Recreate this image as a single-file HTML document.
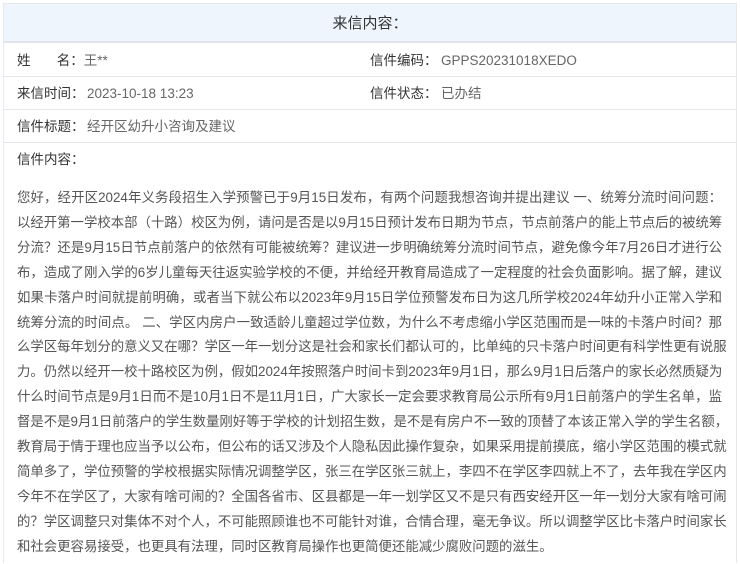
<!DOCTYPE html>
<html><head><meta charset="utf-8">
<style>
*{margin:0;padding:0;box-sizing:border-box}
body{width:740px;height:564px;background:#fff;font-family:"Liberation Sans","Noto Sans CJK SC",sans-serif;overflow:hidden;position:relative}
.box{position:absolute;left:3px;top:3px;width:734px;height:560px;border:1px solid #e6e9ee;border-bottom:none}
.hd{position:absolute;left:4px;top:4px;width:732px;height:39px;background:#eef5fd;border-bottom:2px solid #dfe4ea;text-align:center;line-height:39px;font-size:15px;color:#333}
.row{position:absolute;left:4px;width:732px;height:33px;border-bottom:1px solid #e3e6ea;font-size:13.5px;line-height:33px;color:#333}
.row span{position:absolute;white-space:nowrap}
.v{color:#666}
.c{position:absolute;left:17px;top:186px;width:705px;font-size:13.4px;color:#555;line-height:24.9px}
.c div{white-space:nowrap;text-align:justify;text-align-last:justify;width:705px}
.c div.l{text-align-last:left}
</style></head><body>
<div class="box"></div>
<div class="hd">来信内容：</div>
<div class="row" style="top:44px"><span style="left:13px">姓&nbsp;&nbsp;&nbsp;&nbsp;&nbsp;&nbsp;&nbsp;名：<span class="v" style="position:static">王**</span></span><span style="left:366px">信件编码：</span><span class="v" style="left:437px">GPPS20231018XEDO</span></div>
<div class="row" style="top:77px"><span style="left:13px">来信时间：</span><span class="v" style="left:83px">2023-10-18 13:23</span><span style="left:366px">信件状态：</span><span class="v" style="left:437px">已办结</span></div>
<div class="row" style="top:110px"><span style="left:13px">信件标题：</span><span class="v" style="left:83px">经开区幼升小咨询及建议</span></div>
<div class="row" style="top:143px;border:none"><span style="left:13px">信件内容：</span></div>
<div class="c">
<div>您好，经开区2024年义务段招生入学预警已于9月15日发布，有两个问题我想咨询并提出建议 一、统筹分流时间问题：</div>
<div>以经开第一学校本部（十路）校区为例，请问是否是以9月15日预计发布日期为节点，节点前落户的能上节点后的被统筹</div>
<div>分流？还是9月15日节点前落户的依然有可能被统筹？建议进一步明确统筹分流时间节点，避免像今年7月26日才进行公</div>
<div>布，造成了刚入学的6岁儿童每天往返实验学校的不便，并给经开教育局造成了一定程度的社会负面影响。据了解，建议</div>
<div>如果卡落户时间就提前明确，或者当下就公布以2023年9月15日学位预警发布日为这几所学校2024年幼升小正常入学和</div>
<div>统筹分流的时间点。 二、学区内房户一致适龄儿童超过学位数，为什么不考虑缩小学区范围而是一味的卡落户时间？那</div>
<div>么学区每年划分的意义又在哪？学区一年一划分这是社会和家长们都认可的，比单纯的只卡落户时间更有科学性更有说服</div>
<div>力。仍然以经开一校十路校区为例，假如2024年按照落户时间卡到2023年9月1日，那么9月1日后落户的家长必然质疑为</div>
<div>什么时间节点是9月1日而不是10月1日不是11月1日，广大家长一定会要求教育局公示所有9月1日前落户的学生名单，监</div>
<div>督是不是9月1日前落户的学生数量刚好等于学校的计划招生数，是不是有房户不一致的顶替了本该正常入学的学生名额，</div>
<div>教育局于情于理也应当予以公布，但公布的话又涉及个人隐私因此操作复杂，如果采用提前摸底，缩小学区范围的模式就</div>
<div>简单多了，学位预警的学校根据实际情况调整学区，张三在学区张三就上，李四不在学区李四就上不了，去年我在学区内</div>
<div>今年不在学区了，大家有啥可闹的？全国各省市、区县都是一年一划学区又不是只有西安经开区一年一划分大家有啥可闹</div>
<div>的？学区调整只对集体不对个人，不可能照顾谁也不可能针对谁，合情合理，毫无争议。所以调整学区比卡落户时间家长</div>
<div class="l">和社会更容易接受，也更具有法理，同时区教育局操作也更简便还能减少腐败问题的滋生。</div>
</div>
</body></html>
